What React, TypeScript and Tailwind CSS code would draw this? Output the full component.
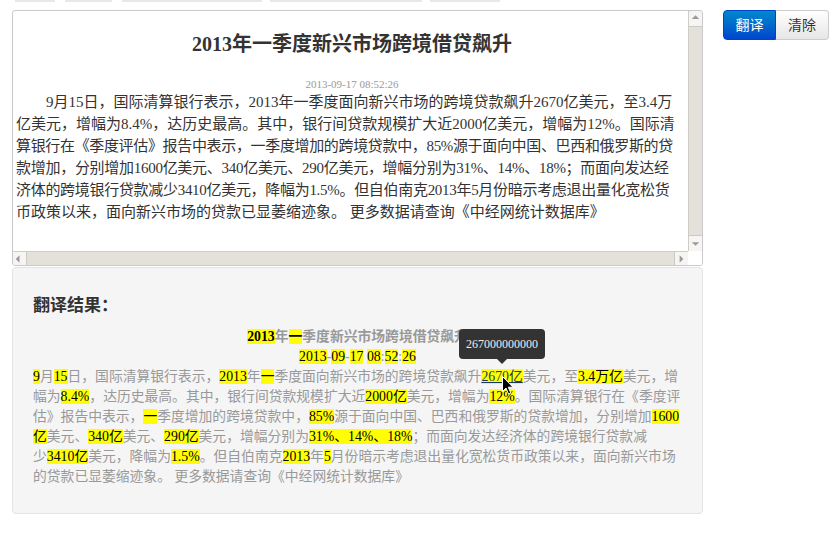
import React from "react";

const serif = "font-['Liberation_Serif','Noto_Sans_CJK_SC',serif]";
const sans = "font-['Liberation_Sans','Noto_Sans_CJK_SC',sans-serif]";

const sourceLines = [
  { text: "9月15日，国际清算银行表示，2013年一季度面向新兴市场的跨境贷款飙升2670亿美元，至3.4万", cls: "indent-[30px]" },
  { text: "亿美元，增幅为8.4%，达历史最高。其中，银行间贷款规模扩大近2000亿美元，增幅为12%。国际清", cls: "" },
  { text: "算银行在《季度评估》报告中表示，一季度增加的跨境贷款中，85%源于面向中国、巴西和俄罗斯的贷", cls: "tracking-[-0.34px]" },
  { text: "款增加，分别增加1600亿美元、340亿美元、290亿美元，增幅分别为31%、14%、18%；而面向发达经", cls: "tracking-[-0.28px]" },
  { text: "济体的跨境银行贷款减少3410亿美元，降幅为1.5%。但自伯南克2013年5月份暗示考虑退出量化宽松货", cls: "tracking-[-0.3px]" },
  { text: "币政策以来，面向新兴市场的贷款已显萎缩迹象。 更多数据请查询《中经网统计数据库》", cls: "" },
];

function Hl({ children }: { children: React.ReactNode }) {
  return <span className="bg-[#ffff00] text-black">{children}</span>;
}

function Cursor() {
  return (
    <svg width="12" height="19" viewBox="0 0 12 19" className="absolute left-[21px] top-[7px]">
      <path d="M0.5 0.5 L0.5 15.5 L4 12 L6.5 18 L8.8 17 L6.3 11.2 L11 11.2 Z" fill="#000" stroke="#fff" strokeWidth="1" />
    </svg>
  );
}

function Tooltip() {
  return (
    <span className="relative bg-[#ffff00] text-[#1b3a57] underline">
      2670亿
      <span className="absolute left-1/2 -translate-x-1/2 bottom-full mb-[5px] flex flex-col items-center">
        <span className={`bg-[#333] text-[#eee] text-[12px] leading-[30px] rounded-[4px] w-[86px] h-[30px] block text-center ${serif}`}>
          267000000000
        </span>
        <span className="block w-0 h-0 border-l-[5px] border-r-[5px] border-t-[5px] border-l-transparent border-r-transparent border-t-[#333]" />
      </span>
      <Cursor />
    </span>
  );
}

function Arrow({ dir }: { dir: "up" | "down" | "left" | "right" }) {
  const pts = {
    up: "3,7 7,3 11,7",
    down: "3,5 7,9 11,5",
    left: "7,3 3,7 7,11",
    right: "5,3 9,7 5,11",
  }[dir];
  return (
    <svg width="14" height="14" viewBox="0 0 14 14">
      <polygon points={pts} fill="#9a9a9a" />
    </svg>
  );
}

export default function App() {
  return (
    <div className={`w-[839px] h-[541px] bg-white overflow-hidden ${serif}`}>
      <div className="flex h-[2px]">
        <div className="ml-[15px] w-[40px] bg-[#e8e8e8]" />
        <div className="ml-[10px] w-[47px] bg-[#e8e8e8]" />
        <div className="ml-[10px] w-[140px] bg-[#e8e8e8]" />
        <div className="ml-[8px] w-[152px] bg-[#e8e8e8]" />
        <div className="ml-[8px] w-[70px] bg-[#e8e8e8]" />
      </div>

      <div className="flex mt-[8px] ml-[12px]">
        <div className="w-[691px]">
          <div className="h-[256px] border border-[#c9c9c9] rounded-[3px] grid grid-cols-[1fr_14px] grid-rows-[1fr_14px] overflow-hidden bg-white">
            <div className="overflow-hidden pl-[3px] text-[#333]">
              <h1 className="text-center text-[20px] font-bold mt-[20px] leading-[26px]">
                2013年一季度新兴市场跨境借贷飙升
              </h1>
              <div className="text-center text-[11px] text-[#999] mt-[20px] leading-[14px]">
                2013-09-17 08:52:26
              </div>
              <div className="text-[15px] leading-[22px]">
                {sourceLines.map((l, i) => (
                  <div key={i} className={`whitespace-nowrap ${l.cls}`}>
                    {l.text}
                  </div>
                ))}
              </div>
            </div>
            <div className="bg-[#e4e0da] border-l border-[#d0ccc6] flex flex-col justify-between">
              <div className="h-[16px] bg-[#f6f5f3] border-b border-[#ccc8c2] rounded-t-[2px] flex items-center justify-center">
                <Arrow dir="up" />
              </div>
              <div className="h-[16px] bg-[#f6f5f3] border-t border-[#ccc8c2] flex items-center justify-center">
                <Arrow dir="down" />
              </div>
            </div>
            <div className="bg-[#e4e0da] border-t border-[#d0ccc6] flex justify-between">
              <div className="w-[14px] bg-[#f6f5f3] border-r border-[#ccc8c2] flex items-center justify-center">
                <Arrow dir="left" />
              </div>
              <div className="w-[14px] bg-[#f6f5f3] border-l border-[#ccc8c2] flex items-center justify-center">
                <Arrow dir="right" />
              </div>
            </div>
            <div className="bg-white" />
          </div>

          <div className="mt-[1px] h-[247px] bg-[#f5f5f5] border border-[#e3e3e3] rounded-[4px] px-[20px]">
            <div className={`mt-[26px] text-[17px] font-bold text-[#333] leading-[24px] ${sans}`}>翻译结果：</div>
            <div className="mt-[9px] text-[13.8px] leading-[20px] text-[#999]">
              <div className="text-center font-bold whitespace-nowrap">
                <Hl>2013</Hl>年<Hl>一</Hl>季度新兴市场跨境借贷飙升
              </div>
              <div className="text-center whitespace-nowrap">
                <Hl>2013</Hl>-<Hl>09</Hl>-<Hl>17</Hl> <Hl>08</Hl>:<Hl>52</Hl>:<Hl>26</Hl>
              </div>
              <div className="whitespace-nowrap">
                <Hl>9</Hl>月<Hl>15</Hl>日，国际清算银行表示，<Hl>2013</Hl>年<Hl>一</Hl>季度面向新兴市场的跨境贷款飙升<Tooltip />美元，至<Hl>3.4万亿</Hl>美元，增
              </div>
              <div className="whitespace-nowrap">
                幅为<Hl>8.4%</Hl>，达历史最高。其中，银行间贷款规模扩大近<Hl>2000亿</Hl>美元，增幅为<Hl>12%</Hl>。国际清算银行在《季度评
              </div>
              <div className="whitespace-nowrap">
                估》报告中表示，<Hl>一</Hl>季度增加的跨境贷款中，<Hl>85%</Hl>源于面向中国、巴西和俄罗斯的贷款增加，分别增加<Hl>1600</Hl>
              </div>
              <div className="whitespace-nowrap">
                <Hl>亿</Hl>美元、<Hl>340亿</Hl>美元、<Hl>290亿</Hl>美元，增幅分别为<Hl>31%、14%、18%</Hl>；而面向发达经济体的跨境银行贷款减
              </div>
              <div className="whitespace-nowrap">
                少<Hl>3410亿</Hl>美元，降幅为<Hl>1.5%</Hl>。但自伯南克<Hl>2013</Hl>年<Hl>5</Hl>月份暗示考虑退出量化宽松货币政策以来，面向新兴市场
              </div>
              <div className="whitespace-nowrap">的贷款已显萎缩迹象。 更多数据请查询《中经网统计数据库》</div>
            </div>
          </div>
        </div>

        <div className={`ml-[20px] flex h-[30px] text-[14px] ${sans}`}>
          <button className="w-[53px] rounded-l-[4px] text-white bg-gradient-to-b from-[#0088cc] to-[#0044cc] border border-[#0044cc]">
            翻译
          </button>
          <button className="w-[53px] rounded-r-[4px] text-[#333] bg-gradient-to-b from-[#ffffff] to-[#e6e6e6] border border-l-0 border-[#cccccc]">
            清除
          </button>
        </div>
      </div>
    </div>
  );
}
